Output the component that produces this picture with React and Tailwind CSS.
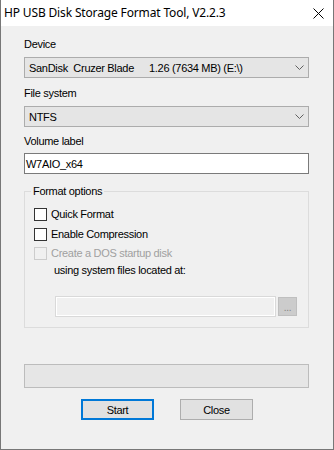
import React from "react";

const Chevron = () => (
  <svg width="9" height="5" viewBox="0 0 9 5" className="block">
    <path d="M0.5 0.5 L4.5 4.5 L8.5 0.5" fill="none" stroke="#606060" strokeWidth="1" />
  </svg>
);

const Combo = ({ children }) => (
  <div className="w-[285px] h-[21px] bg-[#e5e5e5] border border-[#acacac] flex items-center pl-[4px] pr-[4px]">
    <div className="flex-1 flex items-center whitespace-pre">{children}</div>
    <Chevron />
  </div>
);

const Check = ({ label, disabled = false, className = "" }) => (
  <div className={`flex items-center h-[13px] ml-[9px] ${className}`}>
    <div
      className={`w-[13px] h-[13px] shrink-0 border ${
        disabled ? "border-[#cccccc] bg-[#f0f0f0]" : "border-[#333333] bg-white"
      }`}
    />
    <span className={`ml-[4px] leading-[13px] ${disabled ? "text-[#a0a0a0]" : "text-black"}`}>
      {label}
    </span>
  </div>
);

export default function App() {
  return (
    <div className="w-[334px] h-[450px] flex flex-col border-x border-b border-[#777777] leading-[16px] text-black">
      {/* title bar */}
      <div className="h-[26px] bg-white flex items-center pl-[3px] font-['Noto_Sans',sans-serif] text-[12px] tracking-[-0.15px]">
        <span>HP USB Disk Storage Format Tool, V2.2.3</span>
        <svg width="11" height="11" viewBox="0 0 11 11" className="ml-auto mr-[9px]">
          <path d="M0.5 0.5 L10.5 10.5 M10.5 0.5 L0.5 10.5" stroke="#000" strokeWidth="1" />
        </svg>
      </div>

      <div className="flex-1 bg-[#f0f0f0] pl-[23px] pt-[10px] flex flex-col font-['Liberation_Sans',Arial,sans-serif] text-[11px] tracking-[-0.3px]">
        <div>Device</div>
        <div className="mt-[5px]">
          <Combo>
            <span className="w-[120px] shrink-0">SanDisk  Cruzer Blade</span>
            <span>1.26 (7634 MB) (E:\)</span>
          </Combo>
        </div>

        <div className="mt-[7px]">File system</div>
        <div className="mt-[5px]">
          <Combo>NTFS</Combo>
        </div>

        <div className="mt-[6px]">Volume label</div>
        <div className="mt-[4px] w-[285px] h-[21px] bg-white border border-[#7a7a7a] flex items-center pl-[1px]">
          W7AIO_x64
        </div>

        <fieldset className="mt-[9px] w-[285px] border border-[#dcdcdc] pb-[10px]">
          <legend className="ml-[6px] px-[2px]">Format options</legend>
          <Check label="Quick Format" className="mt-[9px]" />
          <Check label="Enable Compression" className="mt-[7px]" />
          <Check label="Create a DOS startup disk" disabled className="mt-[6px]" />
          <div className="mt-[2px] ml-[29px]">using system files located at:</div>
          <div className="mt-[18px] ml-[30px] flex items-center">
            <div className="w-[221px] h-[21px] border border-[#d9d9d9] bg-[#f0f0f0] shadow-[inset_0_0_0_1px_#ffffff]" />
            <div className="ml-[2px] w-[19px] h-[19px] bg-[#cccccc] border border-[#bfbfbf] flex items-center justify-center text-[#838383] text-[10px] leading-[10px] pt-[3px]">
              ...
            </div>
          </div>
        </fieldset>

        <div className="mt-[36px] w-[285px] h-[24px] bg-[#e6e6e6] border border-[#bcbcbc]" />

        <div className="mt-[11px] -ml-[23px] flex justify-center gap-[26px]">
          <button className="w-[73px] h-[21px] bg-[#e1e1e1] border-2 border-[#0078d7] flex items-center justify-center">
            Start
          </button>
          <button className="w-[73px] h-[21px] bg-[#e1e1e1] border border-[#adadad] flex items-center justify-center">
            Close
          </button>
        </div>
      </div>
    </div>
  );
}
